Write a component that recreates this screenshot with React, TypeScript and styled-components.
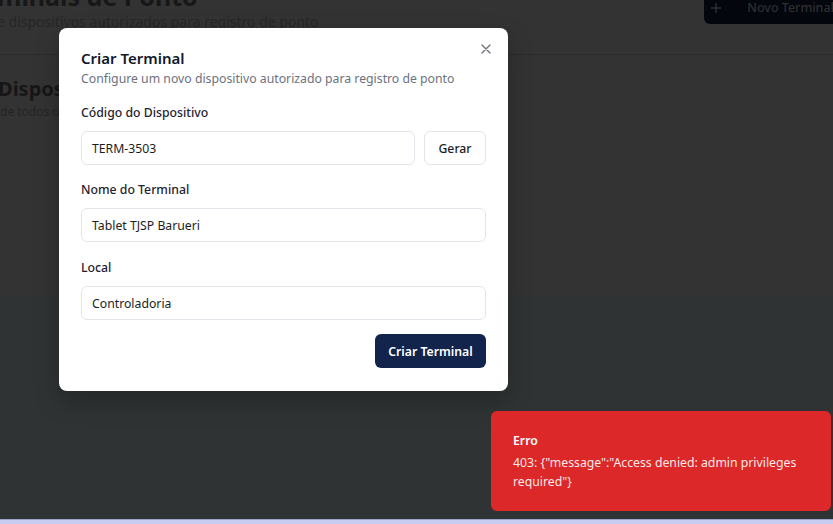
import React from "react";
import styled, { createGlobalStyle } from "styled-components";

const Global = createGlobalStyle`
  html, body { margin: 0; padding: 0; }
  body {
    width: 833px;
    height: 524px;
    overflow: hidden;
    background: #303334;
    font-family: "Noto Sans", "Open Sans", sans-serif;
  }
  * { box-sizing: border-box; }
`;

const Screen = styled.div`
  position: relative;
  width: 833px;
  height: 524px;
  overflow: hidden;
  display: flex;
  flex-direction: column;
`;

const Header = styled.header`
  height: 55px;
  flex: none;
  background: #333333;
  border-bottom: 1px solid #2c2c2c;
  display: flex;
  justify-content: space-between;
  align-items: flex-start;
  overflow: hidden;
`;

const HeadText = styled.div`
  display: flex;
  flex-direction: column;
  margin-top: -20px;
  margin-left: -3px;
`;

const PageTitle = styled.h1`
  margin: 0;
  font-size: 25px;
  line-height: 32px;
  font-weight: 700;
  color: #171717;
  white-space: nowrap;
`;

const PageSub = styled.p`
  margin: 0;
  font-size: 14px;
  line-height: 20px;
  color: #262626;
  white-space: nowrap;
`;

const NewButton = styled.div`
  margin-top: -12px;
  margin-right: -15px;
  height: 36px;
  padding: 0 14px 8px 6px;
  display: flex;
  align-items: flex-end;
  gap: 25px;
  background: #04060d;
  border-radius: 6px;
  color: #2d2f33;
  font-size: 12.5px;
  line-height: 16px;
  font-weight: 500;
  white-space: nowrap;
  svg { margin-bottom: 2px; }
`;

const CardArea = styled.section`
  height: 240px;
  flex: none;
  background: #333333;
  padding-top: 20px;
  overflow: hidden;
`;

const CardTitle = styled.h2`
  margin: 0 0 0 -2px;
  font-size: 20px;
  line-height: 28px;
  font-weight: 700;
  color: #161616;
  white-space: nowrap;
`;

const CardSub = styled.p`
  margin: 0;
  font-size: 12px;
  line-height: 18px;
  color: #242424;
  white-space: nowrap;
`;

const Filler = styled.div`
  flex: 1;
  background: #303334;
`;

const BottomStrip = styled.div`
  height: 5px;
  flex: none;
  background: #c8ccf1;
  border-top: 1px solid #9ea3cc;
`;

const Dialog = styled.div`
  position: absolute;
  left: 59px;
  top: 28px;
  width: 449px;
  background: #ffffff;
  border-radius: 8px;
  padding: 20px 22px 23px;
  box-shadow: 0 10px 25px rgba(0, 0, 0, 0.25);
  display: flex;
  flex-direction: column;
`;

const Close = styled.button`
  position: absolute;
  right: 16px;
  top: 15px;
  width: 12px;
  height: 12px;
  padding: 0;
  border: 0;
  background: transparent;
  display: flex;
  align-items: center;
  justify-content: center;
  color: #6b6f76;
`;

const Title = styled.h3`
  margin: 0;
  font-size: 15px;
  line-height: 20px;
  font-weight: 600;
  color: #111827;
`;

const Desc = styled.p`
  margin: 2px 0 0;
  font-size: 12.25px;
  line-height: 18px;
  color: #6b7280;
`;

const Field = styled.div<{ $gap: number }>`
  margin-top: ${(p) => p.$gap}px;
  display: flex;
  flex-direction: column;
  gap: 9px;
`;

const Label = styled.label`
  font-size: 12.25px;
  line-height: 18px;
  font-weight: 500;
  color: #1f2430;
`;

const Row = styled.div`
  display: flex;
  gap: 9px;
`;

const Input = styled.div`
  flex: 1 0 auto;
  height: 34px;
  border: 1px solid #e3e5ea;
  border-radius: 6px;
  padding: 0 10px;
  display: flex;
  align-items: center;
  font-size: 12.25px;
  color: #1a1d24;
`;

const OutlineButton = styled.button`
  flex: none;
  width: 62px;
  height: 34px;
  border: 1px solid #e3e5ea;
  border-radius: 6px;
  background: #ffffff;
  font-family: inherit;
  font-size: 12.25px;
  font-weight: 500;
  color: #1a1d24;
  padding: 0;
`;

const Footer = styled.div`
  margin-top: 14px;
  display: flex;
  justify-content: flex-end;
`;

const PrimaryButton = styled.button`
  width: 111px;
  height: 34px;
  border: 0;
  border-radius: 6px;
  background: #12234c;
  color: #ffffff;
  font-family: inherit;
  font-size: 12.25px;
  font-weight: 600;
  padding: 0;
`;

const Toast = styled.div`
  position: absolute;
  left: 491px;
  top: 411px;
  width: 340px;
  height: 100px;
  background: #dc2828;
  border-radius: 6px;
  padding: 21px 30px 0 22px;
  color: #ffffff;
`;

const ToastTitle = styled.div`
  font-size: 12.25px;
  line-height: 18px;
  font-weight: 600;
`;

const ToastMsg = styled.div`
  margin-top: 3px;
  font-size: 12.25px;
  line-height: 19px;
  color: rgba(255, 255, 255, 0.92);
`;

export default function App() {
  return (
    <>
      <Global />
      <Screen>
        <Header>
          <HeadText>
            <PageTitle>minais de Ponto</PageTitle>
            <PageSub>e dispositivos autorizados para registro de ponto</PageSub>
          </HeadText>
          <NewButton>
            <svg width="12" height="12" viewBox="0 0 12 12" fill="none" stroke="currentColor" strokeWidth="1.4">
              <path d="M6 1v10M1 6h10" />
            </svg>
            Novo Terminal
          </NewButton>
        </Header>
        <CardArea>
          <CardTitle>Dispositivos</CardTitle>
          <CardSub>de todos os terminais</CardSub>
        </CardArea>
        <Filler />
        <BottomStrip />

        <Dialog>
          <Close aria-label="Fechar">
            <svg width="10" height="10" viewBox="0 0 10 10" fill="none" stroke="currentColor" strokeWidth="1.3" strokeLinecap="round">
              <path d="M1 1l8 8M9 1l-8 8" />
            </svg>
          </Close>
          <Title>Criar Terminal</Title>
          <Desc>Configure um novo dispositivo autorizado para registro de ponto</Desc>

          <Field $gap={16}>
            <Label>Código do Dispositivo</Label>
            <Row>
              <Input>TERM-3503</Input>
              <OutlineButton>Gerar</OutlineButton>
            </Row>
          </Field>

          <Field $gap={16}>
            <Label>Nome do Terminal</Label>
            <Input>Tablet TJSP Barueri</Input>
          </Field>

          <Field $gap={17}>
            <Label>Local</Label>
            <Input>Controladoria</Input>
          </Field>

          <Footer>
            <PrimaryButton>Criar Terminal</PrimaryButton>
          </Footer>
        </Dialog>

        <Toast>
          <ToastTitle>Erro</ToastTitle>
          <ToastMsg>403: {'{"message":"Access denied: admin privileges required"}'}</ToastMsg>
        </Toast>
      </Screen>
    </>
  );
}
